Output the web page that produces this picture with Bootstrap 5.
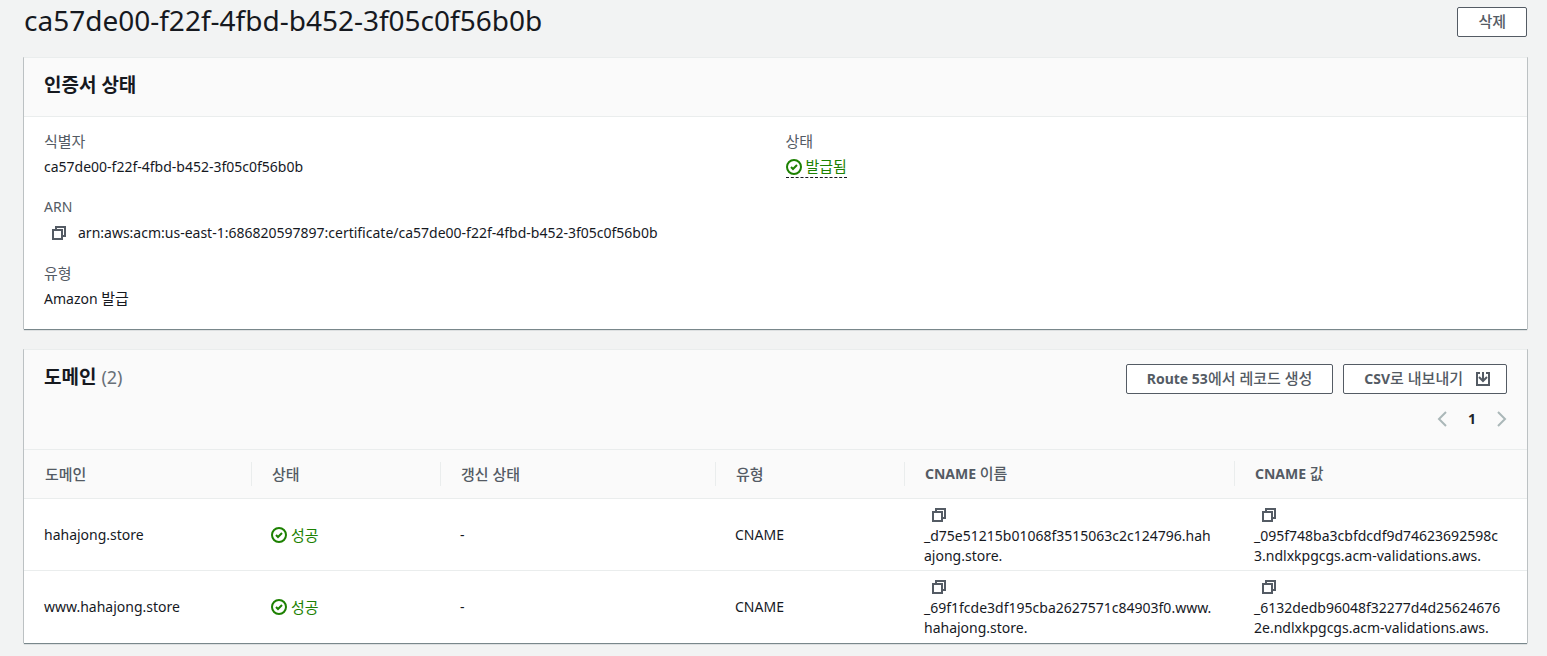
<!DOCTYPE html>
<html lang="ko">
<head>
<meta charset="utf-8">
<meta name="viewport" content="width=device-width, initial-scale=1">
<title>AWS Certificate Manager</title>
<link href="https://cdn.jsdelivr.net/npm/bootstrap@5.3.0/dist/css/bootstrap.min.css" rel="stylesheet">
<style>
  body { background: #f2f3f3; color: #16191f; font-family: "Noto Sans", "Noto Sans CJK KR", sans-serif; font-size: 14px; line-height: 20px; }
  .page { padding: 0 20px 12px 24px; }
  .page-title { font-size: 28px; line-height: 40px; font-weight: 400; }
  .page-top { padding-bottom: 17px; }
  .page-top .btn-aws { margin-top: 7px; }
  .btn-aws { background: #fff; border: 1px solid #545b64; border-radius: 2px; color: #545b64; font-size: 14px; font-weight: 700; height: 30px; line-height: 20px; padding: 4px 20px; }
  .btn-aws:hover { background: #fafafa; border-color: #16191f; color: #16191f; }
  .head-actions { gap: 10px; }
  .btn-export { gap: 12px; padding-right: 15px; }
  .ko { font-size: 15px; }
  .ko-mid { font-size: 15px; font-weight: 500; }
  .panel { background: #fff; border-top: 1px solid #eaeded; box-shadow: 0 1px 1px 0 rgba(0,28,36,.5), 1px 0 0 0 rgba(0,28,36,.15), -1px 0 0 0 rgba(0,28,36,.15); }
  .panel + .panel { margin-top: 20px; }
  .panel-head { background: #fafafa; border-bottom: 1px solid #eaeded; padding: 14px 20px; }
  .panel-title { font-size: 19px; font-weight: 700; line-height: 26px; padding-bottom: 4px; }
  .counter { color: #687078; font-size: 18px; font-weight: 400; }
  .details { padding: 14px 20px 19px; }
  .fields { display: grid; gap: 19px; }
  .fields dt { color: #545b64; font-weight: 400; line-height: 20px; margin-bottom: 5px; }
  .fields dd { line-height: 22px; }
  .fields dd .ko, .btn-aws .ko-mid { line-height: 1; }
  .fields-end { padding-left: 10px; }
  .ok { color: #1d8102; }
  .status-link { border: 0; border-bottom: 1px dashed #16191f; background: none; height: 22px; }
  .icon { width: 16px; height: 16px; fill: none; stroke: currentColor; stroke-width: 2; flex: none; display: block; }
  .copy { background: none; border: 0; color: #545b64; padding: 2px 7px; display: block; }
  .domains .copy { padding-bottom: 3px; }
  .pager { color: #aab7b8; gap: 18px; height: 30px; margin: 10px -3px 1px 0; }
  .pager button { background: none; border: 0; color: inherit; padding: 0; }
  .domains { table-layout: fixed; width: 100%; }
  .domains th { background: #fafafa; color: #545b64; height: 48px; padding: 0; border-bottom: 1px solid #eaeded; }
  .domains th > div { border-right: 1px solid #eaeded; line-height: 24px; padding: 0 20px; }
  .domains th:first-child > div { padding-left: 21px; }
  .domains th:last-child > div { border-right: 0; }
  .domains td { padding: 6px 20px 4px 19px; border-bottom: 1px solid #eaeded; word-break: break-all; vertical-align: middle; }
  .domains td:first-child { padding-left: 20px; }
  .domains tbody tr:last-child td { border-bottom-color: transparent; }
  .w-domain { width: 228px; } .w-status { width: 189px; } .w-renew { width: 275px; } .w-cname { width: 330px; }
</style>
</head>
<body>
<main class="page">
  <header class="page-top d-flex justify-content-between align-items-start">
    <h1 class="page-title mb-0">ca57de00-f22f-4fbd-b452-3f05c0f56b0b</h1>
    <button type="button" class="btn btn-aws"><span class="ko-mid">삭제</span></button>
  </header>

  <section class="panel">
    <div class="panel-head"><h2 class="panel-title mb-0">인증서 상태</h2></div>
    <div class="details row g-0">
      <dl class="fields col-6 mb-0">
        <div><dt class="ko">식별자</dt><dd class="mb-0">ca57de00-f22f-4fbd-b452-3f05c0f56b0b</dd></div>
        <div><dt>ARN</dt><dd class="mb-0 d-flex align-items-center"><button type="button" class="copy" aria-label="ARN 복사"><svg class="icon" viewBox="0 0 16 16"><path d="M2 5h9v9H2z"/><path d="M5 5V2h9v9h-3"/></svg></button><span class="ps-1">arn:aws:acm:us-east-1:686820597897:certificate/ca57de00-f22f-4fbd-b452-3f05c0f56b0b</span></dd></div>
        <div><dt class="ko">유형</dt><dd class="mb-0">Amazon <span class="ko">발급</span></dd></div>
      </dl>
      <dl class="fields fields-end col-6 mb-0 align-content-start">
        <div><dt class="ko">상태</dt><dd class="mb-0"><button type="button" class="status-link ok ko p-0 d-inline-flex align-items-center gap-1"><svg class="icon" viewBox="0 0 16 16"><circle cx="8" cy="8" r="7"/><path d="M5 8l2 2 4-4"/></svg>발급됨</button></dd></div>
      </dl>
    </div>
  </section>

  <section class="panel">
    <div class="panel-head">
      <div class="d-flex justify-content-between align-items-start">
        <h2 class="panel-title mb-0">도메인 <span class="counter">(2)</span></h2>
        <div class="head-actions d-flex">
          <button type="button" class="btn btn-aws">Route 53<span class="ko-mid">에서 레코드 생성</span></button>
          <button type="button" class="btn btn-aws btn-export d-flex align-items-center"><span>CSV<span class="ko-mid">로 내보내기</span></span><svg class="icon" viewBox="0 0 16 16"><path d="M5 2H2v12h12V2h-3M8 1v9M4 6l4 4 4-4"/></svg></button>
        </div>
      </div>
      <nav class="pager d-flex justify-content-end align-items-center" aria-label="페이지">
        <button type="button" aria-label="이전"><svg class="icon" viewBox="0 0 16 16"><path d="M12 1L5 8l7 7"/></svg></button>
        <b class="text-dark">1</b>
        <button type="button" aria-label="다음"><svg class="icon" viewBox="0 0 16 16"><path d="M4 1l7 7-7 7"/></svg></button>
      </nav>
    </div>
    <table class="domains">
      <colgroup><col class="w-domain"><col class="w-status"><col class="w-renew"><col class="w-status"><col class="w-cname"><col></colgroup>
      <thead>
        <tr>
          <th scope="col"><div class="ko-mid">도메인</div></th>
          <th scope="col"><div class="ko-mid">상태</div></th>
          <th scope="col"><div class="ko-mid">갱신 상태</div></th>
          <th scope="col"><div class="ko-mid">유형</div></th>
          <th scope="col"><div>CNAME <span class="ko-mid">이름</span></div></th>
          <th scope="col"><div>CNAME <span class="ko-mid">값</span></div></th>
        </tr>
      </thead>
      <tbody>
        <tr>
          <td>hahajong.store</td>
          <td><span class="ok ko d-flex align-items-center gap-1"><svg class="icon" viewBox="0 0 16 16"><circle cx="8" cy="8" r="7"/><path d="M5 8l2 2 4-4"/></svg>성공</span></td>
          <td>-</td>
          <td>CNAME</td>
          <td><button type="button" class="copy" aria-label="복사"><svg class="icon" viewBox="0 0 16 16"><path d="M2 5h9v9H2z"/><path d="M5 5V2h9v9h-3"/></svg></button>_d75e51215b01068f3515063c2c124796.hahajong.store.</td>
          <td><button type="button" class="copy" aria-label="복사"><svg class="icon" viewBox="0 0 16 16"><path d="M2 5h9v9H2z"/><path d="M5 5V2h9v9h-3"/></svg></button>_095f748ba3cbfdcdf9d74623692598c3.ndlxkpgcgs.acm-validations.aws.</td>
        </tr>
        <tr>
          <td>www.hahajong.store</td>
          <td><span class="ok ko d-flex align-items-center gap-1"><svg class="icon" viewBox="0 0 16 16"><circle cx="8" cy="8" r="7"/><path d="M5 8l2 2 4-4"/></svg>성공</span></td>
          <td>-</td>
          <td>CNAME</td>
          <td><button type="button" class="copy" aria-label="복사"><svg class="icon" viewBox="0 0 16 16"><path d="M2 5h9v9H2z"/><path d="M5 5V2h9v9h-3"/></svg></button>_69f1fcde3df195cba2627571c84903f0.www.hahajong.store.</td>
          <td><button type="button" class="copy" aria-label="복사"><svg class="icon" viewBox="0 0 16 16"><path d="M2 5h9v9H2z"/><path d="M5 5V2h9v9h-3"/></svg></button>_6132dedb96048f32277d4d256246762e.ndlxkpgcgs.acm-validations.aws.</td>
        </tr>
      </tbody>
    </table>
  </section>
</main>
<script src="https://cdn.jsdelivr.net/npm/bootstrap@5.3.0/dist/js/bootstrap.bundle.min.js"></script>
</body>
</html>
